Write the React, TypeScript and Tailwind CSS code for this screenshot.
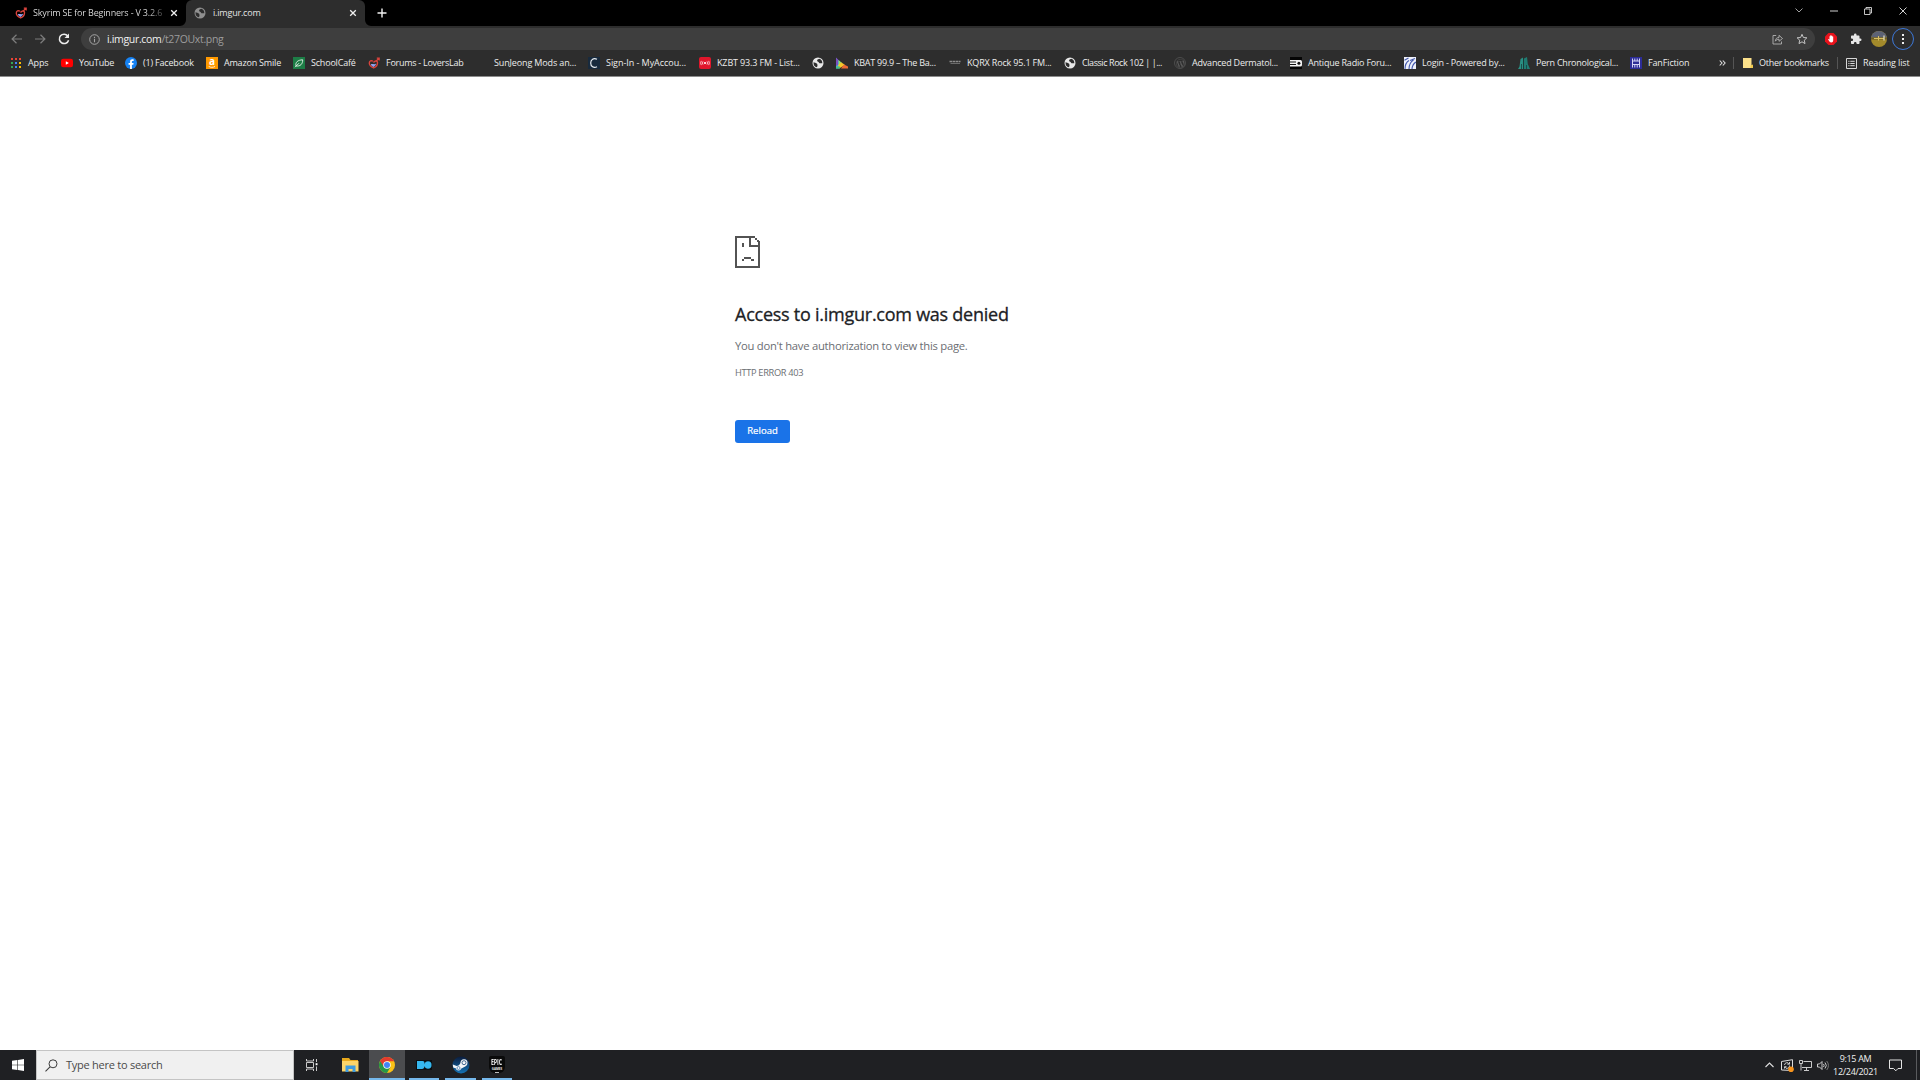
import { ReactNode } from 'react';
import { FaWordpressSimple } from 'react-icons/fa';
import { MdExtension } from 'react-icons/md';

interface Bookmark {
  label: string;
  icon: ReactNode;
  width: string;
  tracking?: string;
}

function Globe({ color = '#e8e8e8' }: { color?: string }) {
  return (
    <svg viewBox="0 0 12 12" className="size-3 shrink-0">
      <circle cx="6" cy="6" r="5.5" fill={color} />
      <path d="M1.500 5.200 4 6l1.300 1 .2 2-.7 1.300C2.700 9.800 1.300 8 1.500 5.200Z" fill="#2d2d2d" />
      <path d="M7.500 1.800 5.500 2.600 5 4l1.500 1 1 1.300h2.800c.2-2-.9-3.800-2.800-4.500Z" fill="#2d2d2d" />
    </svg>
  );
}

function LoversLab() {
  return (
    <svg viewBox="0 0 12 12" className="size-3 shrink-0" fill="none">
      <path d="M5 4.300C3.300 3 1.200 4 1.300 6.200c.1 2.200 2.200 3.800 4.400 4.700 2.200-.9 3.900-2.700 3.800-5.400-.1-1.300-1.200-1.900-2.300-1.300L5.400 5.300" stroke="#d9433c" strokeWidth="1.400" />
      <path d="M8 4.200 11 1.300M8.800 1.200l2.400-.1v2.300" stroke="#d9433c" strokeWidth="1.200" />
      <path d="M2.800 7.200c1.600-.7 3.300.5 5.200-.4C8 8.200 6.800 9.300 5.700 9.900 4.500 9.400 3.200 8.500 2.800 7.200Z" fill="#8fa2f2" />
    </svg>
  );
}

function AppsIcon() {
  const colors = ['#ea4335', '#ea4335', '#ea4335', '#34a853', '#4285f4', '#fbbc04', '#34a853', '#4285f4', '#fbbc04'];
  return (
    <span className="grid size-[10px] shrink-0 grid-cols-3 gap-[1.5px]">
      {colors.map((c, i) => (
        <span key={i} style={{ backgroundColor: c }} />
      ))}
    </span>
  );
}

function YouTube() {
  return (
    <svg viewBox="0 0 12 12" className="size-3 shrink-0">
      <rect y="1.700" width="12" height="8.600" rx="2.200" fill="#f00" />
      <path d="M4.800 4.200v3.600L7.900 6z" fill="#fff" />
    </svg>
  );
}

function Facebook() {
  return (
    <svg viewBox="0 0 24 24" className="size-3 shrink-0">
      <circle cx="12" cy="12" r="12" fill="#1682f3" />
      <path d="M10.100 24v-8.400H7.100V12h3V9.400c0-3 1.800-4.700 4.500-4.700 1.300 0 2.700.2 2.700.2v3h-1.500c-1.500 0-2 .9-2 1.900V12h3.400l-.6 3.600h-2.800V24z" fill="#fff" />
    </svg>
  );
}

function Amazon() {
  return (
    <span className="flex size-3 shrink-0 flex-col items-center bg-[#ff9900]">
      <span className="h-[9px] text-[10px] font-bold leading-[8px] text-white">a</span>
      <svg viewBox="0 0 10 3" className="h-[2px] w-[8px]">
        <path d="M0 .5c3 2 6.500 2 9.500.2" fill="none" stroke="#fff" strokeWidth="1.200" />
      </svg>
    </span>
  );
}

function SchoolCafe() {
  return (
    <svg viewBox="0 0 12 12" className="size-3 shrink-0">
      <rect width="12" height="12" fill="#1d7d46" />
      <path d="M3 8.900C2.200 5.300 4.700 3 9.700 2.800 9.800 7 7.200 9.700 3 8.900ZM2 10.200l4-4" fill="none" stroke="#e6f4ea" strokeWidth=".9" />
    </svg>
  );
}

function SignIn() {
  return (
    <svg viewBox="0 0 12 12" className="size-3 shrink-0">
      <rect width="12" height="12" fill="#182a3d" />
      <path d="M9 2.200C5.600.500 2.700 2.500 2.700 6S5.600 11.500 9 9.800" fill="none" stroke="#e8edf2" strokeWidth="1.200" />
    </svg>
  );
}

function Radio() {
  return (
    <svg viewBox="0 0 12 12" className="size-3 shrink-0">
      <rect width="12" height="12" rx="2" fill="#e0162b" />
      <circle cx="6" cy="6" r="1.100" fill="#fff" />
      <path d="M4 4.400a2.600 2.600 0 0 0 0 3.200M8 4.400a2.600 2.600 0 0 1 0 3.200M2.300 3.900a4 4 0 0 0 0 4.200M9.700 3.900a4 4 0 0 1 0 4.200" fill="none" stroke="#fff" strokeWidth=".7" />
    </svg>
  );
}

function Kbat() {
  return (
    <svg viewBox="0 0 12 12" className="size-3 shrink-0">
      <path d="M0 1 5.500 6 3 11.500H0z" fill="#3bb4e8" />
      <path d="M0 .500 2.500 3 2 8 0 9z" fill="#7a4fc0" />
      <path d="m2.500 3 3.500 3L3 9z" fill="#9be05c" />
      <path d="M5.500 5.500 9 8l-6 3.500L2 8z" fill="#f4c62c" />
      <path d="m8 7.500 4 2v2H5z" fill="#ec6a34" />
      <path d="M0 9.500h4v2H0z" fill="#4bc07c" />
    </svg>
  );
}

function Kqrx() {
  return (
    <svg viewBox="0 0 12 12" className="size-3 shrink-0">
      <path d="M.500 4.500h11" stroke="#8d8d8d" strokeWidth="1.600" strokeDasharray="2.500 .5" />
      <path d="M1.500 6.500h9.500" stroke="#6b6b6b" />
    </svg>
  );
}

function RadioForum() {
  return (
    <svg viewBox="0 0 12 12" className="size-3 shrink-0">
      <path d="M0 0h12v12H0z" fill="#050505" />
      <path d="M0 3h10.500a1.500 1.500 0 0 1 1.500 1.500V8a1.500 1.500 0 0 1-1.500 1.500H0z" fill="#f2f2f2" />
      <path d="M0 5h6M0 7.500h6" stroke="#111" />
      <circle cx="8.900" cy="6.200" r="1.500" fill="#111" />
    </svg>
  );
}

function Powered() {
  return (
    <svg viewBox="0 0 12 12" className="size-3 shrink-0">
      <path d="M0 0h12v12H0z" fill="#eef1fb" />
      <path d="M.500 3.300 4.500 1M1 12c0-4 1.500-7 4-8.500M5 12c0-4.500 1.500-7 4.500-9M8 12c.2-3.500 1.500-5.500 4-7M6 3.500 11 1.500" fill="none" stroke="#4459ad" strokeWidth="1.100" />
    </svg>
  );
}

function Pern() {
  return (
    <svg viewBox="0 0 12 12" className="size-3 shrink-0">
      <path d="M2.500 2 5 .500V12H0l1.500-2.500z" fill="#2a8f83" />
      <path d="M6 1.500 9 0l.8 7L12 12H6z" fill="#1f7b72" />
      <path d="M5.500 2v10M3.500 7v5M8.500 8v4" stroke="#173f3c" strokeWidth=".8" />
    </svg>
  );
}

function FanFiction() {
  return (
    <svg viewBox="0 0 12 12" className="size-3 shrink-0">
      <path d="M0 0h12v12H0z" fill="#2c2c97" />
      <path d="M2.500 1.500v9M9.500 1.500v9M2.500 4h7M2.500 7.500h7M4.800 1.500V4M7.200 1.500V4M4.800 7.500v3M7.200 7.500v3" stroke="#d3d3f5" strokeWidth="1" />
    </svg>
  );
}

const bookmarks: Bookmark[] = [
  { label: 'YouTube', icon: <YouTube />, width: 'w-16', tracking: 'tracking-[-0.3px]' },
  { label: '(1) Facebook', icon: <Facebook />, width: 'w-[81px]', tracking: 'tracking-[-0.18px]' },
  { label: 'Amazon Smile', icon: <Amazon />, width: 'w-[87px]', tracking: 'tracking-[-0.2px]' },
  { label: 'SchoolCafé', icon: <SchoolCafe />, width: 'w-[75px]', tracking: 'tracking-[-0.2px]' },
  { label: 'Forums - LoversLab', icon: <LoversLab />, width: 'w-[108px]', tracking: 'tracking-[-0.27px]' },
  { label: 'SunJeong Mods an...', icon: <span className="size-3 shrink-0" />, width: 'w-28' },
  { label: 'Sign-In - MyAccou...', icon: <SignIn />, width: 'w-[111px]', tracking: 'tracking-[-0.05px]' },
  { label: 'KZBT 93.3 FM - List...', icon: <Radio />, width: 'w-[113px]' },
  { label: '', icon: <Globe />, width: 'w-6' },
  { label: 'KBAT 99.9 – The Ba...', icon: <Kbat />, width: 'w-[113px]', tracking: 'tracking-[-0.25px]' },
  { label: 'KQRX Rock 95.1 FM...', icon: <Kqrx />, width: 'w-[115px]', tracking: 'tracking-[-0.17px]' },
  { label: 'Classic Rock 102 | |...', icon: <Globe />, width: 'w-[110px]', tracking: 'tracking-[-0.43px]' },
  {
    label: 'Advanced Dermatol...',
    icon: (
      <span className="flex size-3 shrink-0 items-center justify-center rounded-full border border-[#4c4c4c]">
        <FaWordpressSimple className="size-[9px] text-[#5c5c5c]" />
      </span>
    ),
    width: 'w-[116px]',
    tracking: 'tracking-[-0.2px]',
  },
  { label: 'Antique Radio Foru...', icon: <RadioForum />, width: 'w-[114px]', tracking: 'tracking-[-0.2px]' },
  { label: 'Login - Powered by...', icon: <Powered />, width: 'w-[114px]', tracking: 'tracking-[-0.2px]' },
  { label: 'Pern Chronological...', icon: <Pern />, width: 'w-28', tracking: 'tracking-[-0.22px]' },
  { label: 'FanFiction', icon: <FanFiction />, width: 'w-[89px]' },
];

function Close({ className }: { className?: string }) {
  return (
    <svg viewBox="0 0 8 8" className={className} stroke="currentColor" fill="none">
      <path d="m1.200 1.200 5.600 5.600M6.800 1.200 1.200 6.800" strokeWidth="1.300" />
    </svg>
  );
}

function TabStrip() {
  return (
    <div className="flex h-[26px] bg-black text-[9px] text-[#e4e4e4]">
      <div className="flex h-[25px] w-[186px] items-center pl-[15px]">
        <LoversLab />
        <span className="ml-1.5 w-[130px] overflow-hidden whitespace-nowrap bg-gradient-to-r from-[#e4e4e4] from-88% to-[#444] bg-clip-text tracking-[-0.18px] text-transparent">
          Skyrim SE for Beginners - V 3.2.6
        </span>
        <Close className="ml-[7px] size-2 text-[#f0f0f0]" />
      </div>
      <div className="relative flex h-[26px] w-[179px] items-center rounded-t-md bg-[#2d2d2d] pb-px pl-2">
        <svg viewBox="0 0 6 6" className="absolute -left-1.5 bottom-0 size-1.5">
          <path d="M6 0v6H0a6 6 0 0 0 6-6" fill="#2d2d2d" />
        </svg>
        <svg viewBox="0 0 6 6" className="absolute -right-1.5 bottom-0 size-1.5">
          <path d="M0 0v6h6a6 6 0 0 1-6-6" fill="#2d2d2d" />
        </svg>
        <Globe color="#8f8f8f" />
        <span className="ml-[7px] w-[136px] tracking-[-0.2px]">i.imgur.com</span>
        <Close className="size-2 text-[#f0f0f0]" />
      </div>
      <svg viewBox="0 0 10 10" className="ml-3 mt-2 size-[10px]" stroke="#f2f2f2">
        <path d="M5 .500v9M.500 5h9" strokeWidth="1.400" />
      </svg>
      <div className="ml-auto flex h-[21px] items-center">
        <svg viewBox="0 0 8 5" className="mr-[27px] h-[5px] w-2" fill="none" stroke="#a0a0a0">
          <path d="m.500.500 3.500 3.500L7.500.500" />
        </svg>
        <svg viewBox="0 0 8 2" className="mr-[26px] h-0.5 w-2" stroke="#cfcfcf">
          <path d="M0 1h8" />
        </svg>
        <svg viewBox="0 0 8 8" className="mr-[27px] size-2" fill="none" stroke="#d8d8d8">
          <path d="M.500 2h5.500v5.500H.500zM2 2V.500h5.500V6H6" strokeWidth=".9" />
        </svg>
        <svg viewBox="0 0 8 8" className="mr-[13px] size-2" stroke="#e8e8e8">
          <path d="m.500.500 7 7M7.500.500l-7 7" strokeWidth=".9" />
        </svg>
      </div>
    </div>
  );
}

function Toolbar() {
  return (
    <div className="flex h-[26px] items-center bg-[#2d2d2d]">
      <svg viewBox="0 0 11 10" className="ml-[11px] h-[10px] w-[11px]" fill="none" stroke="#7d7d7d">
        <path d="M11 5H1M5.500.700 1.100 5l4.400 4.300" strokeWidth="1.200" />
      </svg>
      <svg viewBox="0 0 11 10" className="ml-[13px] h-[10px] w-[11px]" fill="none" stroke="#7d7d7d">
        <path d="M0 5h10M5.500.700 9.900 5 5.500 9.300" strokeWidth="1.200" />
      </svg>
      <svg viewBox="0 0 12 12" className="ml-[12px] size-3" fill="none" stroke="#ececec">
        <path d="M9.800 3A4.700 4.700 0 1 0 10.600 7.200" strokeWidth="1.500" />
        <path d="M11 .500V5H6.500z" fill="#ececec" stroke="none" />
      </svg>
      <div className="ml-[11px] flex h-[22px] w-[1734px] items-center rounded-full bg-[#3e3e3e] pl-2">
        <svg viewBox="0 0 11 11" className="size-[11px]" fill="none" stroke="#a5a5a5">
          <circle cx="5.500" cy="5.500" r="4.800" />
          <path d="M5.500 4.800v3.400M5.500 2.800v1.100" strokeWidth="1.100" />
        </svg>
        <span className="ml-[7px] pt-px text-[10.5px] tracking-[-0.33px] text-[#9c9c9c]">
          <span className="text-[#f0f0f0]">i.imgur.com</span>/t27OUxt.png
        </span>
        <svg viewBox="0 0 11 11" className="ml-auto size-[11px]" fill="none" stroke="#b2b2b2">
          <path d="M4.200 1.500H1v8.500h8.500V7.500M3.300 7.200C3.500 4.500 5 3.500 7 3.500V1.300L10.500 4.500 7 7.300V5.200C5.300 5.200 4.200 5.800 3.300 7.200Z" strokeWidth=".9" />
        </svg>
        <svg viewBox="0 0 12 12" className="ml-[13px] mr-[7px] size-3" fill="none" stroke="#c4c4c4">
          <path d="m6 1.300 1.400 3.200 3.500.300-2.600 2.400.7 3.400L6 8.800l-3 1.800.7-3.400L1.100 4.800l3.500-.300z" />
        </svg>
      </div>
      <svg viewBox="0 0 12 12" className="ml-[10px] size-3">
        <path d="M3.500 0h5L12 3.500v5L8.500 12h-5L0 8.500v-5z" fill="#e8131c" />
        <path d="M3 6.300 3.800 6l.7.800V3.200h.8v-.9h1v.5h1v.8h.9V7.500c0 1.300-.8 2-1.900 2-1.400 0-1.900-1-3.300-3.200Z" fill="#fff" />
      </svg>
      <MdExtension className="ml-[13px] size-3 text-[#e6e6e6]" />
      <svg viewBox="0 0 16 16" className="ml-[9px] size-4 shrink-0">
        <clipPath id="avatar">
          <circle cx="8" cy="8" r="8" />
        </clipPath>
        <g clipPath="url(#avatar)">
          <path d="M0 0h16v16H0z" fill="#a38a2b" />
          <path d="M0 0h16v6.500H0z" fill="#5c6275" />
          <path d="M0 6.500h16v2H0z" fill="#6b5b25" />
          <path d="M3 7.500h10M7.500 5v4.500" stroke="#d8be62" />
          <path d="M13 4.500v5" stroke="#dcd8bd" strokeWidth="1.300" />
        </g>
      </svg>
      <div className="ml-[5px] flex size-[22px] shrink-0 flex-col items-center justify-center gap-[2px] rounded-full border-[1.5px] border-[#3d78d8]">
        <span className="size-[2px] bg-[#f0f0f0]" />
        <span className="size-[2px] bg-[#f0f0f0]" />
        <span className="size-[2px] bg-[#f0f0f0]" />
      </div>
    </div>
  );
}

function BookmarkBar() {
  return (
    <div className="flex h-[25px] items-center whitespace-nowrap border-b border-[#8c8c8c] bg-[#2d2d2d] pb-[2px] text-[9px] tracking-[-0.14px] text-[#ececec]">
      <div className="flex w-[61px] shrink-0 items-center gap-[7px] pl-[11px]">
        <AppsIcon />
        Apps
      </div>
      {bookmarks.map((b, i) => (
        <div key={i} className={`flex shrink-0 items-center gap-1.5 ${b.width}`}>
          {b.icon}
          {b.label && <span className={b.tracking}>{b.label}</span>}
        </div>
      ))}
      <svg viewBox="0 0 7 6" className="h-1.5 w-[7px]" fill="none" stroke="#dedede">
        <path d="M.700.500 3 3 .700 5.500M3.800.500 6.100 3 3.800 5.500" strokeWidth="1.100" />
      </svg>
      <span className="ml-[7px] h-3 w-px bg-[#555]" />
      <svg viewBox="0 0 10 10" className="ml-[9px] size-[10px]">
        <path d="M0 0h8.500v7H10v3H0z" fill="#fbe08a" />
        <path d="M7.500 10V7.500L10 6.500V10z" fill="#eec84d" />
      </svg>
      <span className="ml-1.5 w-[78px] tracking-[-0.28px]">Other bookmarks</span>
      <span className="h-3 w-px bg-[#555]" />
      <svg viewBox="0 0 11 11" className="ml-2 size-[11px]" fill="none" stroke="#d8d8d8">
        <path d="M.500.500h10v10H.500z" />
        <path d="M2.300 3.300h1.200M4.300 3.300h4.400M2.300 5.500h1.200M4.300 5.500h4.400M2.300 7.700h1.200M4.300 7.700h4.400" />
      </svg>
      <span className="ml-1.5">Reading list</span>
    </div>
  );
}

function ErrorPage() {
  return (
    <main className="flex-1 bg-white pl-[735px] pt-[159px] text-[#6b6e73]">
      <svg viewBox="0 0 25 32" className="h-8 w-[25px]" fill="#535353">
        <path d="M0 0h20v2H2v28h21V11h-9V2h2v7h7V5h2v27H0z" />
        <path d="M20 2h2v2h-2zM22 4h2v2h-2zM7 7h2v4H7zM9 21h7v2H9zM7 23h2v2H7zM16 23h3v2h-3z" />
      </svg>
      <h1 className="mt-[34px] h-6 text-[18px] font-medium leading-6 tracking-[-0.25px] text-[#202124] [-webkit-text-stroke:0.3px]">
        Access to i.imgur.com was denied
      </h1>
      <p className="mt-[12px] text-[11.25px] leading-4 tracking-[-0.26px]">
        You don't have authorization to view this page.
      </p>
      <p className="mt-[13px] text-[9.25px] leading-3 tracking-[-0.33px]">HTTP ERROR 403</p>
      <button className="mt-[41px] block h-[23px] w-[55px] rounded-[3px] bg-[#1a73e8] text-[9.5px] font-medium tracking-[0.05px] text-white [-webkit-text-stroke:0.2px]">
        Reload
      </button>
    </main>
  );
}

function Taskbar() {
  return (
    <footer className="flex h-[30px] bg-[#1f2023]">
      <div className="flex w-9 items-center justify-center">
        <svg viewBox="0 0 12 12" className="size-3" fill="#fff">
          <path d="M0 1.700 5.400 1v4.700H0zM6 .9 12 0v5.700H6zM0 6.300h5.400V11L0 10.300zM6 6.300h6V12l-6-.9z" />
        </svg>
      </div>
      <div className="flex w-[258px] items-center border border-[#c4c4c4] bg-[#f0f0f0] pl-2">
        <svg viewBox="0 0 13 13" className="size-[13px]" fill="none" stroke="#3c3c3c">
          <circle cx="8" cy="4.800" r="4" />
          <path d="M5 7.800.500 12.300" strokeWidth="1.100" />
        </svg>
        <span className="ml-2 text-[11px] tracking-[-0.25px] text-[#4a4a4a]">Type here to search</span>
      </div>
      <div className="flex w-[75px] items-center pl-3">
        <svg viewBox="0 0 12 12" className="size-3" fill="none" stroke="#dedede">
          <path d="M.500 0v2h7V0M.500 12v-2h7v2M.500 3.500h7v5h-7zM10.500 0v3M10.500 7.500V12" strokeWidth=".9" />
          <path d="M9.600 4.200h1.900v2H9.600z" fill="#fff" stroke="none" />
        </svg>
        <svg viewBox="0 0 17 14" className="ml-6 h-3.5 w-[17px]">
          <path d="M0 0h7l1.500 2H16v11H0z" fill="#e8a91c" />
          <path d="M0 3h16.500v10.500H0z" fill="#fbd469" />
          <path d="M3.500 7.500h10V14h-3v-3h-4v3h-3z" fill="#3e9bdf" />
        </svg>
      </div>
      <div className="flex w-9 items-center justify-center border-b-2 border-[#76b9ed] bg-[#4b4c4f] pt-0.5">
        <svg viewBox="0 0 24 24" className="size-4">
          <circle cx="12" cy="12" r="12" fill="#fbc116" />
          <path d="M1.600 6A12 12 0 0 0 12 24l5.200-9L12 12z" fill="#279847" />
          <path d="M12 6.500h10.700A12 12 0 0 0 1.600 6l5.200 8z" fill="#e33b2e" />
          <circle cx="12" cy="12" r="5.600" fill="#fff" />
          <circle cx="12" cy="12" r="4.500" fill="#4285f4" />
        </svg>
      </div>
      <div className="ml-1 flex w-[30px] items-center justify-center border-b-2 border-[#76b9ed]">
        <svg viewBox="0 0 16 10" className="mt-0.5 h-[10px] w-4" fill="#35b7ef">
          <path d="M0 0h16v10H0z" fill="#0b0f12" rx="2" />
          <path d="M1 1h5.500c2 0 2.200 1.500 1.800 3.500C9 2 10.200 1.200 12 1.200a3.500 3.700 0 1 1 0 7.500c-1.800 0-3-.8-3.700-2.700C8.500 8 7.500 9 6 9H1z" />
        </svg>
      </div>
      <div className="ml-[6px] flex w-[31px] items-center justify-center border-b-2 border-[#76b9ed]">
        <svg viewBox="0 0 18 18" className="mt-0.5 size-[18px]">
          <defs>
            <linearGradient id="steam" x1="0" y1="0" x2="0" y2="1">
              <stop offset="0" stopColor="#0b1c3c" />
              <stop offset="1" stopColor="#1573b5" />
            </linearGradient>
          </defs>
          <circle cx="9" cy="9" r="8.500" fill="url(#steam)" />
          <path d="M.800 8.500 6 10.600l3-4L14 10l-4.500 2.600-3 .6L1.200 11.500z" fill="#f4f6f8" />
          <circle cx="12" cy="6.700" r="3.500" fill="#f4f6f8" />
          <circle cx="12" cy="6.700" r="2" fill="#f4f6f8" stroke="#1c4879" strokeWidth=".8" />
          <circle cx="6.500" cy="12" r="2.500" fill="#f4f6f8" />
          <circle cx="6.500" cy="12" r="1.500" fill="none" stroke="#1c5c97" strokeWidth=".6" />
        </svg>
      </div>
      <div className="ml-[6px] flex w-[30px] items-center justify-center border-b-2 border-[#76b9ed]">
        <div className="relative flex h-[17px] w-4 flex-col items-center rounded-[2px] rounded-b-md bg-[#0a0a0a] pt-[2px] font-bold text-[#e8e8e8]">
          <span className="scale-x-75 scale-y-125 text-[7px] leading-[7px]">EPIC</span>
          <span className="mt-[3px] text-[3px] leading-[3px]">GAMES</span>
          <span className="mt-px h-px w-1 bg-[#bbb]" />
        </div>
      </div>
      <div className="ml-auto flex items-center">
        <svg viewBox="0 0 9 6" className="h-1.5 w-[9px]" fill="none" stroke="#e0e0e0">
          <path d="m.500 5 4-4 4 4" strokeWidth="1.100" />
        </svg>
        <svg viewBox="0 0 13 13" className="ml-[7px] size-[13px]" fill="none" stroke="#dcdcdc">
          <path d="M.500 2.500 11.500.700v10.800L.500 11z" />
          <path d="M3.500 6a2.500 2.500 0 0 1 4.700-1M8.500 6.500a2.500 2.500 0 0 1-4.700 1.500M8.500 3v2.200H6.300M3.500 9.500V7.700h2" strokeWidth=".9" />
          <circle cx="10" cy="10.200" r="2.800" fill="#f7941d" stroke="none" />
        </svg>
        <svg viewBox="0 0 13 11" className="ml-[5px] h-[11px] w-[13px]" fill="none" stroke="#dcdcdc">
          <path d="M4.500 1.500h8v6H3M.500.500h3v3h-3zM2 3.500v7M7.500 7.500v2.500M5 10.500h5" strokeWidth=".9" />
        </svg>
        <svg viewBox="0 0 12 11" className="ml-[5px] h-[11px] w-3" fill="none" stroke="#dcdcdc">
          <path d="M.500 4h2L5 1.500v8L2.500 7h-2zM6.500 4a2.300 2.300 0 0 1 0 3M8 2.500a4.500 4.500 0 0 1 0 6" strokeWidth=".9" />
          <path d="M9.700 1a6.700 6.700 0 0 1 0 9" stroke="#808080" strokeWidth=".9" />
        </svg>
        <div className="ml-[4px] w-[45px] whitespace-nowrap text-center text-[9px] leading-[13px] tracking-[-0.35px] text-[#f0f0f0]">
          <div className="-mt-px">9:15 AM</div>
          <div className="tracking-[-0.3px]">12/24/2021</div>
        </div>
        <svg viewBox="0 0 13 13" className="ml-[11px] size-[13px]" fill="none" stroke="#e4e4e4">
          <path d="M.500 1h12v8.500H9l-2.200 2.300-2.200-2.300H.500z" />
        </svg>
        <span className="ml-[14px] mr-[3px] h-[30px] w-px bg-[#5a5b5e]" />
      </div>
    </footer>
  );
}

export default function App() {
  return (
    <div className="flex h-[1080px] w-[1920px] flex-col overflow-hidden font-['Open_Sans','Noto_Sans',sans-serif]">
      <TabStrip />
      <Toolbar />
      <BookmarkBar />
      <ErrorPage />
      <Taskbar />
    </div>
  );
}
